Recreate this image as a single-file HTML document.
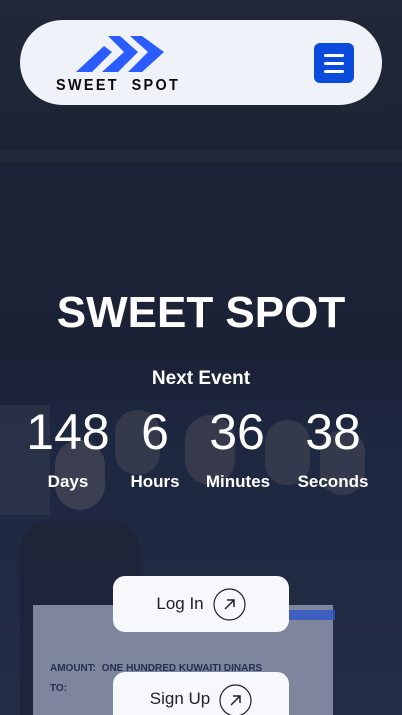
<!DOCTYPE html>
<html><head><meta charset="utf-8"><style>
*{margin:0;padding:0;box-sizing:border-box}
html{width:402px;height:715px;overflow:hidden}
body{width:402px;height:715px;overflow:hidden;position:relative;font-family:"Liberation Sans",sans-serif;
background:linear-gradient(180deg,#1a2130 0%,#1d2538 20%,#1b2236 50%,#1e2740 60%,#232c45 100%)}
.abs{position:absolute}
.nav{left:20px;top:20px;width:362px;height:85px;border-radius:43px;background:#eff3f9}
.menu{left:314px;top:43px;width:40px;height:40px;border-radius:6px;background:#0a4bdc}
.menu i{position:absolute;left:10px;width:20px;height:3px;background:#fff;border-radius:2px}
.logo{left:56px;top:77px;font-weight:bold;font-size:16px;letter-spacing:2.6px;color:#0b0b0b;transform:scaleX(0.9);transform-origin:left;white-space:nowrap}
.w{color:#fff;text-align:center}
.num{top:402px;font-size:50px;font-weight:300;line-height:60px}
.lab{top:470px;font-size:17px;font-weight:bold;line-height:24px}
.btn{left:113px;width:176px;height:56px;border-radius:12px;background:#f6f8fb;display:flex;align-items:center;justify-content:center;font-size:17px;color:#222}
.btn svg{margin-left:9px}
</style></head><body>
<div class="abs" style="left:0;top:0;width:402px;height:170px;background:linear-gradient(180deg,#222a3a,#1b2232);opacity:.9"></div>
<div class="abs" style="left:0;top:150px;width:402px;height:12px;background:#2a3245;opacity:.4"></div>
<div class="abs" style="left:0;top:405px;width:50px;height:110px;background:#3a4255;opacity:.4"></div>
<div class="abs" style="left:55px;top:440px;width:50px;height:70px;border-radius:25px;background:#6f6a70;opacity:.35"></div>
<div class="abs" style="left:115px;top:410px;width:45px;height:65px;border-radius:22px;background:#6b6468;opacity:.3"></div>
<div class="abs" style="left:185px;top:415px;width:50px;height:70px;border-radius:25px;background:#706769;opacity:.3"></div>
<div class="abs" style="left:265px;top:420px;width:45px;height:65px;border-radius:22px;background:#6a6469;opacity:.3"></div>
<div class="abs" style="left:320px;top:430px;width:45px;height:65px;border-radius:22px;background:#6a6469;opacity:.3"></div>
<div class="abs" style="left:20px;top:520px;width:120px;height:195px;border-radius:30px 30px 0 0;background:#1e2436;opacity:.7"></div>
<div class="abs" style="left:33px;top:605px;width:300px;height:110px;background:#7d869c"></div>
<div class="abs" style="left:270px;top:610px;width:65px;height:10px;background:#2f55c8;opacity:.8"></div>
<div class="abs" style="left:50px;top:663px;font-size:10px;font-weight:bold;color:#243050">AMOUNT:&nbsp; ONE HUNDRED KUWAITI DINARS</div>
<div class="abs" style="left:50px;top:683px;font-size:10px;font-weight:bold;color:#243050">TO:</div>

<div class="abs nav"></div>
<svg class="abs" style="left:76px;top:32px" width="90" height="42" viewBox="0 0 90 42">
<polygon fill="#2a5cff" points="0,40 28,14 36,20 16,40"/>
<polygon fill="#2a5cff" points="26,40 48,20 32,4 44,4 62,20 42,40"/>
<polygon fill="#2a5cff" points="52,40 72,20 54,4 66,4 88,20 66,40"/>
</svg>
<div class="abs logo">SWEET&nbsp; SPOT</div>
<div class="abs menu"><i style="top:11px"></i><i style="top:19px"></i><i style="top:27px"></i></div>

<div class="abs w" style="left:0;width:402px;top:285px;font-size:44px;font-weight:bold;line-height:56px">SWEET SPOT</div>
<div class="abs w" style="left:0;width:402px;top:368px;font-size:19px;font-weight:bold">Next Event</div>

<div class="abs w num" style="left:18px;width:100px">148</div>
<div class="abs w num" style="left:125px;width:60px">6</div>
<div class="abs w num" style="left:197px;width:80px">36</div>
<div class="abs w num" style="left:293px;width:80px">38</div>
<div class="abs w lab" style="left:28px;width:80px">Days</div>
<div class="abs w lab" style="left:120px;width:70px">Hours</div>
<div class="abs w lab" style="left:198px;width:80px">Minutes</div>
<div class="abs w lab" style="left:288px;width:90px">Seconds</div>

<div class="abs btn" style="top:576px">Log In<svg width="33" height="33" viewBox="0 0 33 33"><circle cx="16.5" cy="16.5" r="15.5" fill="none" stroke="#222" stroke-width="1.2"/><path d="M12 21L21 12M14 12h7v7" fill="none" stroke="#222" stroke-width="1.5"/></svg></div>
<div class="abs btn" style="top:672px;height:43px;border-radius:12px 12px 0 0;align-items:flex-start;padding-top:17px">Sign Up<svg width="33" height="33" viewBox="0 0 33 33" style="margin-top:-5px"><circle cx="16.5" cy="16.5" r="15.5" fill="none" stroke="#222" stroke-width="1.2"/><path d="M12 21L21 12M14 12h7v7" fill="none" stroke="#222" stroke-width="1.5"/></svg></div>
</body></html>
